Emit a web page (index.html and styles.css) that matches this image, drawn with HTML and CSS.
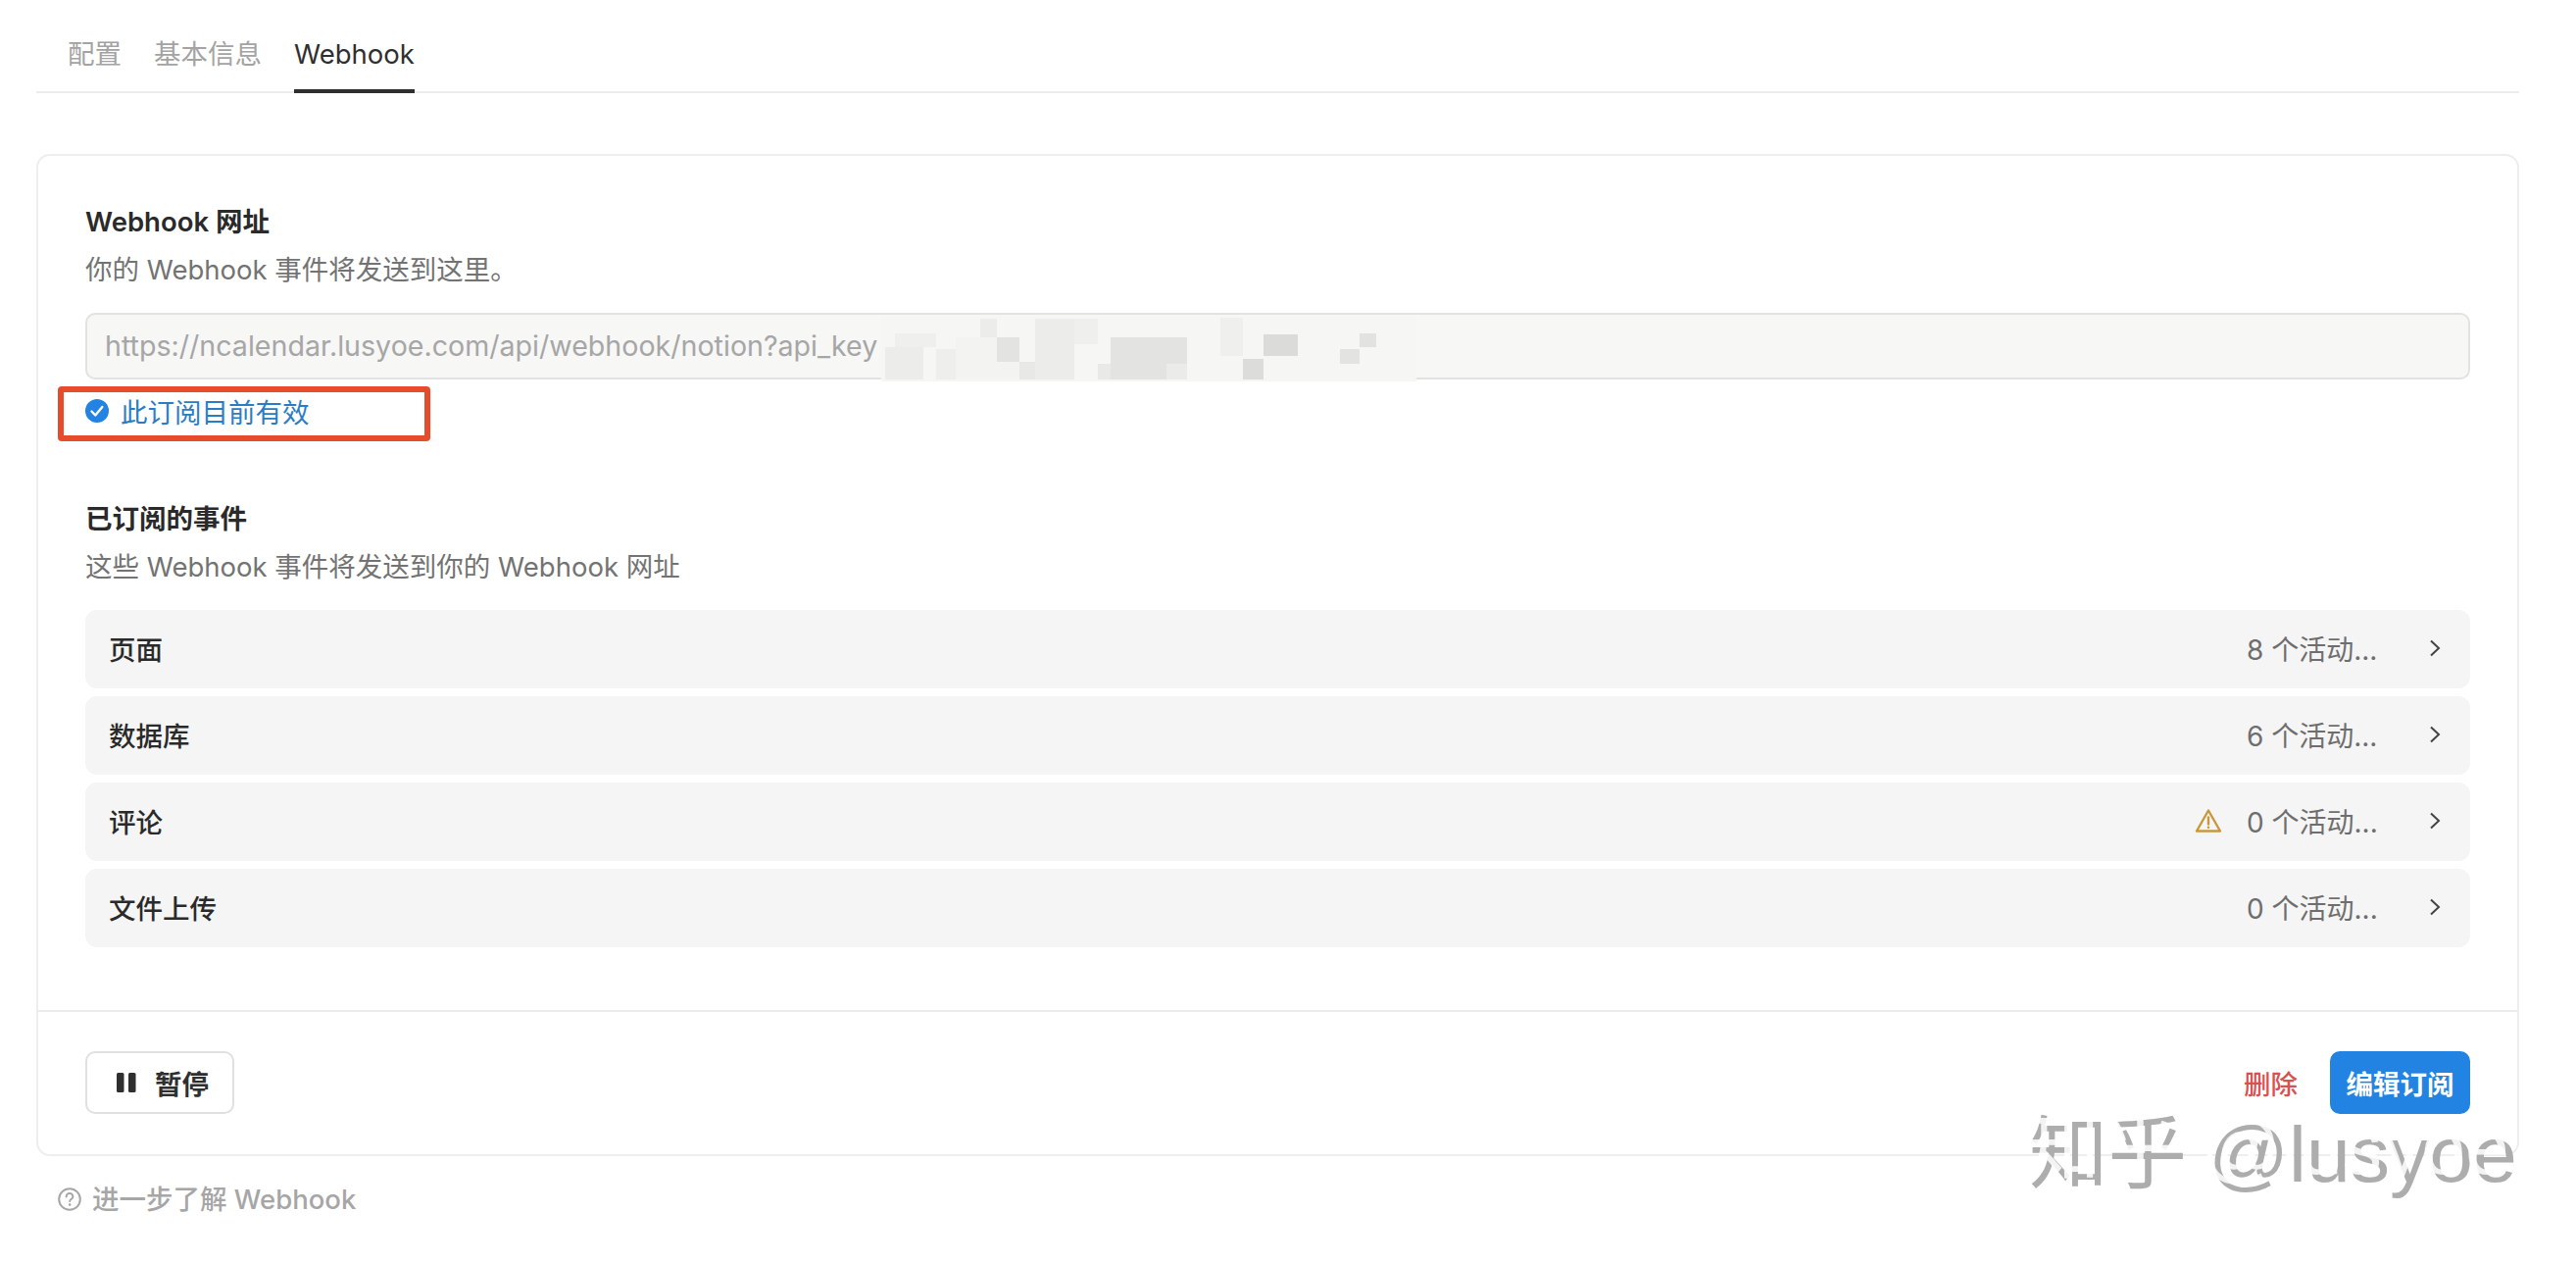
FILE: index.html
```html
<!DOCTYPE html>
<html lang="zh-CN">
<head>
    <meta charset="UTF-8">
    <meta name="viewport" content="width=device-width, initial-scale=1.0">
    <title>Webhook</title>
    <link rel="stylesheet" href="styles.css">
</head>
<body>
    <div class="page">
        <div class="tabs">
            <div class="tab">配置</div>
            <div class="tab">基本信息</div>
            <div class="tab active">Webhook</div>
        </div>

        <div class="card">
            <div class="card-body">
                <h2 class="title">Webhook 网址</h2>
                <p class="desc">你的 Webhook 事件将发送到这里。</p>

                <div class="url-box">
                    <div class="url-input">https://ncalendar.lusyoe.com/api/webhook/notion?api_key</div>
                    <!-- mosaic over the secret part of the url -->
                    <svg class="mosaic" width="560" height="70" viewBox="895 318 560 70">
                        <rect x="899" y="320" width="546" height="68" fill="#f6f6f5"/>
                        <rect x="903" y="353" width="39" height="33" fill="#ececeb"/>
                        <rect x="913" y="339" width="42" height="14" fill="#efefee"/>
                        <rect x="955" y="355" width="20" height="31" fill="#eeeeed"/>
                        <rect x="975" y="343" width="65" height="43" fill="#f3f3f2"/>
                        <rect x="1000" y="324" width="17" height="19" fill="#ececeb"/>
                        <rect x="1017" y="343" width="23" height="25" fill="#e3e3e2"/>
                        <rect x="1040" y="368" width="16" height="18" fill="#e8e8e7"/>
                        <rect x="1056" y="324" width="40" height="62" fill="#ececeb"/>
                        <rect x="1096" y="324" width="24" height="26" fill="#efefee"/>
                        <rect x="1120" y="370" width="13" height="16" fill="#e9e9e8"/>
                        <rect x="1133" y="343" width="78" height="43" fill="#e3e3e2"/>
                        <rect x="1190" y="370" width="21" height="16" fill="#ebebea"/>
                        <rect x="1245" y="323" width="23" height="39" fill="#efefee"/>
                        <rect x="1268" y="365" width="21" height="21" fill="#dcdcdb"/>
                        <rect x="1289" y="340" width="35" height="22" fill="#dbdbda"/>
                        <rect x="1367" y="355" width="20" height="15" fill="#e3e3e2"/>
                        <rect x="1387" y="339" width="17" height="14" fill="#e2e2e1"/>
                    </svg>
                </div>

                <div class="status">
                    <svg class="status-icon" width="24" height="24" viewBox="0 0 24 24">
                        <circle cx="12" cy="12" r="12" fill="#2383e2"/>
                        <path d="M6.5 12.5l3.8 4 7-8.5" fill="none" stroke="#fff" stroke-width="2.4" stroke-linecap="round" stroke-linejoin="round"/>
                    </svg>
                    <span>此订阅目前有效</span>
                    <div class="highlight"></div>
                </div>

                <h2 class="title events-title">已订阅的事件</h2>
                <p class="desc">这些 Webhook 事件将发送到你的 Webhook 网址</p>

                <div class="event-list">
                    <div class="event-row">
                        <span class="event-name">页面</span>
                        <span class="event-count">8 个活动...</span>
                        <svg class="chevron" width="12" height="20" viewBox="0 0 12 20"><path d="M2 2.5l8 7.5-8 7.5" /></svg>
                    </div>
                    <div class="event-row">
                        <span class="event-name">数据库</span>
                        <span class="event-count">6 个活动...</span>
                        <svg class="chevron" width="12" height="20" viewBox="0 0 12 20"><path d="M2 2.5l8 7.5-8 7.5" /></svg>
                    </div>
                    <div class="event-row">
                        <span class="event-name">评论</span>
                        <svg class="warn" width="28" height="26" viewBox="0 0 28 26">
                            <path d="M14 2.5L26 23.5H2z" fill="none" stroke="#c9973f" stroke-width="2.4" stroke-linejoin="round"/>
                            <path d="M14 9.5v7" stroke="#c9973f" stroke-width="2.4" stroke-linecap="round"/>
                            <circle cx="14" cy="19.8" r="1.3" fill="#c9973f"/>
                        </svg>
                        <span class="event-count">0 个活动...</span>
                        <svg class="chevron" width="12" height="20" viewBox="0 0 12 20"><path d="M2 2.5l8 7.5-8 7.5" /></svg>
                    </div>
                    <div class="event-row">
                        <span class="event-name">文件上传</span>
                        <span class="event-count">0 个活动...</span>
                        <svg class="chevron" width="12" height="20" viewBox="0 0 12 20"><path d="M2 2.5l8 7.5-8 7.5" /></svg>
                    </div>
                </div>
            </div>

            <div class="card-footer">
                <button class="btn btn-pause">
                    <svg width="20" height="20" viewBox="0 0 20 20">
                        <rect x="0" y="0" width="7.5" height="20" rx="1.5" fill="#2f2f2f"/>
                        <rect x="12" y="0" width="7.5" height="20" rx="1.5" fill="#2f2f2f"/>
                    </svg>
                    暂停
                </button>
                <div class="footer-right">
                    <span class="delete">删除</span>
                    <button class="btn btn-primary">编辑订阅</button>
                </div>
            </div>
        </div>

        <div class="help">
            <svg width="24" height="24" viewBox="0 0 24 24">
                <circle cx="12" cy="12" r="10.8" fill="none" stroke="#a6a6a6" stroke-width="2"/>
                <path d="M8.6 9.4a3.4 3.4 0 0 1 6.8 0c0 2.2-3.2 2.4-3.2 4.6" fill="none" stroke="#a6a6a6" stroke-width="2" stroke-linecap="round"/>
                <circle cx="12.2" cy="17.6" r="1.3" fill="#a6a6a6"/>
            </svg>
            <span>进一步了解 Webhook</span>
        </div>
    </div>

    <div class="watermark" data-text="知乎 @lusyoe">知乎 @lusyoe</div>
</body>
</html>
```

FILE: styles.css
```css
* {
    margin: 0;
    padding: 0;
    box-sizing: border-box;
}

body {
    font-family: Inter, "Noto Sans CJK SC", sans-serif;
    font-size: 27.5px;
    background: #fff;
    color: #2f2f2f;
    position: relative;
    height: 1288px;
    overflow: hidden;
}

.page {
    padding: 0 58px 0 37px;
}

.tabs {
    display: flex;
    gap: 33px;
    height: 95px;
    padding-left: 32px;
    border-bottom: 2px solid #ececec;
}

.tab {
    height: 95px;
    line-height: 111px;
    color: #a3a3a3;
}

.tab.active {
    color: #2f2f2f;
    border-bottom: 4px solid #2f2f2f;
}

.card {
    margin-top: 62px;
    border: 2px solid #eeeeee;
    border-radius: 14px;
    background: #fff;
}

.card-body {
    padding: 47px 48px 64px 48px;
    border-bottom: 2px solid #ececec;
}

.title {
    font-size: 27.5px;
    font-weight: 600;
    line-height: 40px;
    color: #2a2a2a;
}

.events-title {
    margin-top: 70px;
}

.desc {
    margin-top: 7px;
    line-height: 44px;
    color: #737373;
}

.url-box {
    position: relative;
    margin-top: 22px;
}

.url-input {
    height: 68px;
    line-height: 64px;
    padding-left: 18px;
    font-size: 28.6px;
    background: #f7f7f6;
    border: 2px solid #e2e2e2;
    border-radius: 10px;
    color: #a6a6a6;
}

.mosaic {
    position: absolute;
    top: 0;
    left: 808px;
}

.status {
    position: relative;
    display: flex;
    align-items: center;
    gap: 12px;
    height: 40px;
    margin-top: 12px;
    color: #2a7dc4;
}

.highlight {
    position: absolute;
    top: -5px;
    left: -28px;
    width: 380px;
    height: 56px;
    border: 6px solid #e64b2b;
    border-radius: 4px;
}

.event-list {
    display: flex;
    flex-direction: column;
    gap: 8px;
    margin-top: 22px;
}

.event-row {
    display: flex;
    align-items: center;
    height: 80px;
    padding: 0 30px 2px 24px;
    background: #f5f5f5;
    border-radius: 12px;
}

.event-name {
    flex: 1;
    font-weight: 500;
    color: #2a2a2a;
}

.event-count {
    width: 132px;
    white-space: nowrap;
    font-size: 28px;
    color: #6e6e6e;
}

.warn {
    margin-right: 25px;
}

.chevron {
    margin-left: 54px;
}

.chevron path {
    fill: none;
    stroke: #444;
    stroke-width: 2;
}

.card-footer {
    display: flex;
    align-items: center;
    justify-content: space-between;
    padding: 40px 48px 41px 48px;
}

.btn {
    display: flex;
    align-items: center;
    justify-content: center;
    height: 64px;
    font-family: inherit;
    font-size: 27.5px;
    font-weight: 600;
    border-radius: 10px;
    cursor: pointer;
}

.btn-pause {
    gap: 19px;
    width: 152px;
    padding-left: 30px;
    justify-content: flex-start;
    background: #fff;
    color: #2f2f2f;
    border: 2px solid #e0e0e0;
}

.btn-primary {
    width: 143px;
    background: #2383e2;
    color: #fff;
    border: none;
}

.footer-right {
    display: flex;
    align-items: center;
    gap: 33px;
}

.delete {
    font-weight: 500;
    color: #d8504f;
}

.help {
    display: flex;
    align-items: center;
    gap: 11px;
    margin-top: 26px;
    padding-left: 22px;
    font-weight: 500;
    line-height: 36px;
    color: #a6a6a6;
}

/* grey text with a white copy shifted up-left, cuts the letters like the original */
.watermark {
    position: absolute;
    top: 1127px;
    left: 2070px;
    font-family: "Liberation Sans", "Noto Sans CJK SC", sans-serif;
    font-size: 80.5px;
    line-height: 100px;
    white-space: nowrap;
    color: #adadad;
}

.watermark::after {
    content: attr(data-text);
    position: absolute;
    top: -8px;
    left: -8px;
    color: rgba(255, 255, 255, 0.85);
}
```
